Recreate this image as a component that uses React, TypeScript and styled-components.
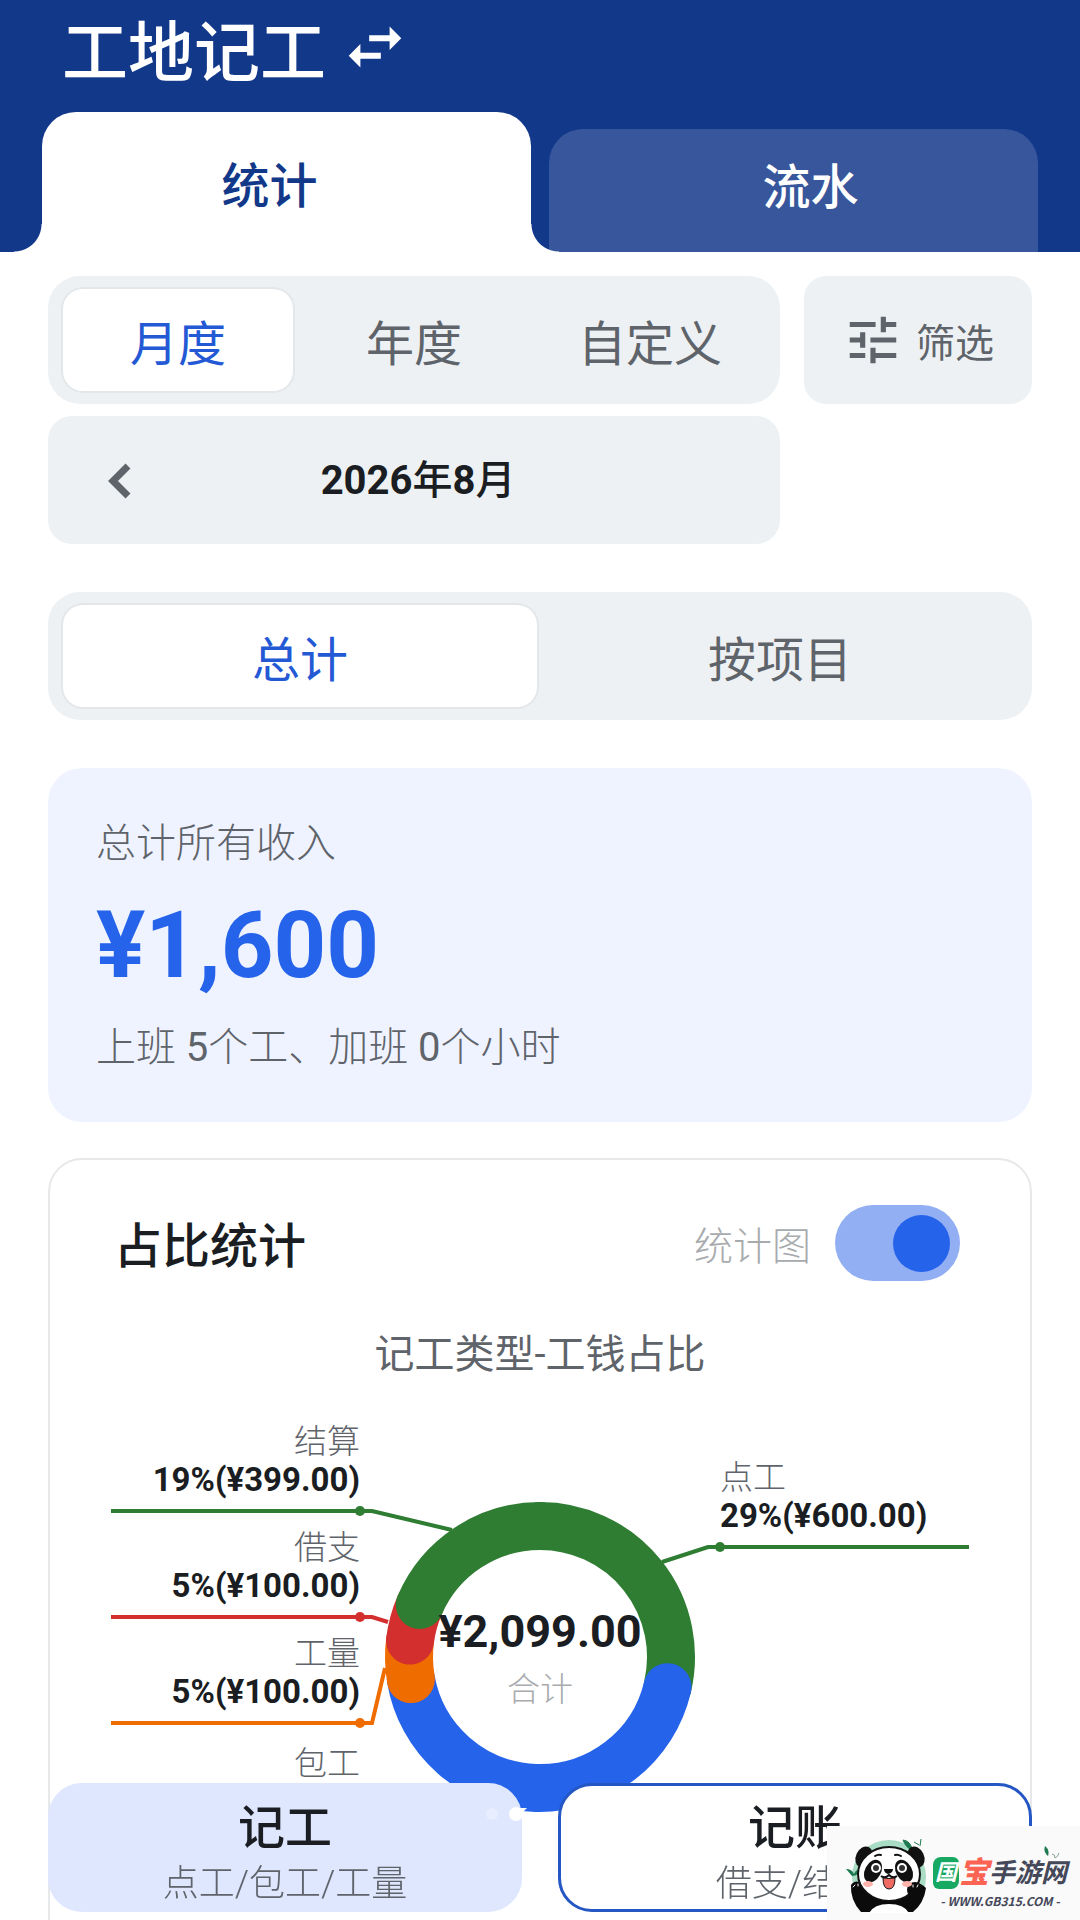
import React, { useId, useState } from "react";
import styled, { createGlobalStyle } from "styled-components";
import { MdSwapHoriz, MdTune } from "react-icons/md";

const color = {
  navy: "#12388a",
  navySoft: "#38569c",
  blue: "#2563eb",
  blueText: "#2459d6",
  blueBorder: "#2456c4",
  track: "#93aff4",
  fill: "#edf1f4",
  tint: "#eff3ff",
  action: "#dfe7ff",
  ink: "#1a1d21",
  gray: "#5f646b",
  mute: "#a8abae",
  line: "#e6e8ea",
  green: "#2e7d32",
  red: "#d32f2f",
  orange: "#ef6c00",
};

const GlobalStyle = createGlobalStyle`
  *, *::before, *::after { box-sizing: border-box; }
  body {
    margin: 0;
    background: #fff;
    color: ${color.ink};
    font-family: Roboto, "Noto Sans CJK SC", sans-serif;
  }
  button {
    border: 0;
    padding: 0;
    background: none;
    color: inherit;
    font: inherit;
    cursor: pointer;
  }
  h1, h2, h3, p { margin: 0; font-weight: inherit; }
`;

const Screen = styled.div`
  height: 100vh;
  overflow: hidden;
`;

/* ---------- header ---------- */

const Header = styled.header`
  background: ${color.navy};
`;

const TitleRow = styled.div`
  display: flex;
  align-items: center;
  gap: 14px;
  height: 112px;
  padding: 0 62px 18px;
  color: #fff;
`;

const AppTitle = styled.h1`
  padding-top: 14px;
  font-size: 66px;
  font-weight: 500;
  line-height: 80px;
`;

const IconButton = styled.button`
  display: flex;
`;

const Tabs = styled.nav`
  display: flex;
  align-items: flex-end;
  gap: 18px;
  padding: 0 42px;
`;

const Tab = styled.button<{ $active?: boolean }>`
  position: relative;
  flex: 1;
  height: ${(p) => (p.$active ? 140 : 123)}px;
  padding: ${(p) => (p.$active ? "0 34px 0 0" : "0 0 16px 34px")};
  border-radius: 34px 34px 0 0;
  background: ${(p) => (p.$active ? "#fff" : color.navySoft)};
  color: ${(p) => (p.$active ? color.navy : "#fff")};
  font-size: 48px;
  font-weight: 500;
  z-index: ${(p) => (p.$active ? 1 : 0)};

  &::before,
  &::after {
    content: "";
    display: ${(p) => (p.$active ? "block" : "none")};
    position: absolute;
    bottom: 0;
    width: 28px;
    height: 28px;
  }
  &::before {
    right: 100%;
    background: radial-gradient(circle at 0 0, transparent 27px, #fff 28px);
  }
  &::after {
    left: 100%;
    background: radial-gradient(circle at 100% 0, transparent 27px, #fff 28px);
  }
`;

/* ---------- controls ---------- */

const Main = styled.main`
  padding: 24px 48px 0;
`;

const Filters = styled.section`
  display: grid;
  grid-template-columns: 732fr 228fr;
  grid-auto-rows: 128px;
  gap: 12px 24px;
`;

const Segments = styled.div<{ $spaced?: boolean }>`
  display: flex;
  gap: 6px;
  height: 128px;
  margin: ${(p) => (p.$spaced ? "48px 0" : "0")};
  padding: 13px 15px;
  border-radius: 32px;
  background: ${color.fill};
`;

const Segment = styled.button<{ $active?: boolean }>`
  flex: 1;
  border-radius: 20px;
  background: ${(p) => (p.$active ? "#fff" : "transparent")};
  box-shadow: ${(p) => (p.$active ? "0 0 0 2px #e4e7ea" : "none")};
  color: ${(p) => (p.$active ? color.blueText : color.gray)};
  font-size: 48px;
`;

const FilterButton = styled.button`
  display: flex;
  align-items: center;
  justify-content: center;
  gap: 12px;
  border-radius: 22px;
  background: ${color.fill};
  color: ${color.gray};
  font-size: 39px;
`;

const MonthPicker = styled.div`
  display: grid;
  grid-template-columns: 68px 1fr 60px;
  align-items: center;
  padding: 2px 38px 0;
  border-radius: 24px;
  background: ${color.fill};
  color: ${color.gray};
`;

const Chevron = styled.svg`
  width: 68px;
  height: 68px;
  fill: none;
  stroke: currentColor;
  stroke-width: 7px;
`;

const Month = styled.span`
  color: ${color.ink};
  font-size: 40px;
  font-weight: 500;
  line-height: 56px;
  text-align: center;
`;

const Strong = styled.b`
  font-weight: 700;
`;

/* ---------- income card ---------- */

const IncomeCard = styled.section`
  display: flex;
  flex-direction: column;
  padding: 46px 48px 44px;
  border-radius: 34px;
  background: ${color.tint};
`;

const Note = styled.p`
  color: ${color.gray};
  font-size: 40px;
  font-weight: 300;
  line-height: 60px;
`;

const Digit = styled.span`
  font-weight: 400;
`;

const Amount = styled.strong`
  color: ${color.blue};
  font-size: 92px;
  line-height: 108px;
  margin: 18px 0;
`;

/* ---------- share card ---------- */

const ShareCard = styled.section`
  margin-top: 36px;
  border: 2px solid ${color.line};
  border-radius: 34px;
`;

const ShareHead = styled.div`
  display: flex;
  align-items: center;
  justify-content: space-between;
  padding: 45px 70px 0 64px;
`;

const ShareTitle = styled.h2`
  padding-top: 8px;
  font-size: 48px;
  font-weight: 500;
  line-height: 68px;
`;

const ToggleLabel = styled.label`
  display: flex;
  align-items: center;
  gap: 24px;
  color: ${color.mute};
  font-size: 39px;
  font-weight: 300;
`;

const Toggle = styled.input`
  display: flex;
  align-items: center;
  appearance: none;
  width: 125px;
  height: 76px;
  margin: 0;
  padding: 0 10px;
  border-radius: 38px;
  background: #cfd3d8;
  cursor: pointer;

  &::before {
    content: "";
    width: 57px;
    height: 57px;
    border-radius: 50%;
    background: #fff;
  }
  &:checked {
    justify-content: flex-end;
    background: ${color.track};
  }
  &:checked::before {
    background: ${color.blue};
  }
`;

const ChartTitle = styled.h3`
  margin: 44px 0 2px;
  color: ${color.gray};
  font-size: 40px;
  line-height: 60px;
  text-align: center;
`;

const Chart = styled.svg`
  display: block;
  width: 100%;
`;

const PartName = styled.text`
  fill: ${color.gray};
  font-size: 33px;
  font-weight: 300;
`;

const PartValue = styled.text`
  fill: ${color.ink};
  font-size: 33px;
  font-weight: 700;
`;

const Total = styled.text`
  fill: ${color.ink};
  font-size: 45px;
  font-weight: 700;
  text-anchor: middle;
`;

const TotalName = styled.text`
  fill: ${color.mute};
  font-size: 33px;
  font-weight: 300;
  text-anchor: middle;
`;

/* ---------- bottom actions ---------- */

const Actions = styled.footer`
  position: fixed;
  right: 48px;
  bottom: 8px;
  left: 48px;
  display: grid;
  grid-template-columns: 1fr 1fr;
  gap: 36px;
`;

const Action = styled.button<{ $outlined?: boolean }>`
  display: flex;
  flex-direction: column;
  align-items: center;
  justify-content: center;
  height: 129px;
  padding-top: 10px;
  border: 3px solid ${(p) => (p.$outlined ? color.blueBorder : color.action)};
  border-radius: 34px;
  background: ${(p) => (p.$outlined ? "#fff" : color.action)};
`;

const ActionName = styled.span`
  font-size: 47px;
  font-weight: 500;
  line-height: 62px;
`;

const ActionHint = styled.span`
  color: ${color.gray};
  font-size: 36px;
  font-weight: 300;
  line-height: 50px;
`;

const PageDots = styled.svg`
  position: fixed;
  bottom: 96px;
  left: 480px;
  width: 80px;
  height: 20px;
`;

/* ---------- site badge ---------- */

const Badge = styled.aside`
  position: fixed;
  right: 0;
  bottom: 0;
  display: flex;
  align-items: center;
  gap: 5px;
  width: 253px;
  height: 94px;
  padding-left: 19px;
  background: #fafafa;
`;

const Panda = styled.svg`
  flex: none;
  width: 82px;
  height: 80px;
`;

const BadgeText = styled.div`
  display: flex;
  flex-direction: column;
  align-items: center;
  padding-top: 20px;
`;

const BadgeName = styled.div`
  display: flex;
  align-items: center;
  color: #454859;
  font-size: 26px;
  font-style: italic;
  font-weight: 700;
  line-height: 36px;
`;

const Seal = styled.span`
  display: flex;
  align-items: center;
  justify-content: center;
  width: 26px;
  height: 32px;
  border-radius: 8px 6px 8px 6px;
  background: #17a862;
  color: #fff;
  font-size: 22px;
`;

const Treasure = styled.span`
  color: #fb6353;
  font-size: 30px;
  font-weight: 900;
`;

const BadgeUrl = styled.div`
  color: #454859;
  font-family: "Noto Sans CJK SC", sans-serif;
  font-size: 12px;
  font-style: italic;
  font-weight: 700;
  line-height: 20px;
`;

const Leaves = styled.svg`
  position: absolute;
  top: 20px;
  right: 20px;
  width: 16px;
  height: 14px;
`;

/* ---------- chart data ---------- */

const CX = 490;
const CY = 270;
const R = 131;

/* share of the ring, in percent */
const slices = [
  { name: "点工", share: 28.7, fill: color.green },
  { name: "包工", share: 43.6, fill: color.blue },
  { name: "工量", share: 4.7, fill: color.orange },
  { name: "借支", share: 4.5, fill: color.red },
  { name: "结算", share: 18.5, fill: color.green },
];

const leaders = [
  { name: "结算", text: "19%(¥399.00)", y: 124, fill: color.green, tip: "402,143" },
  { name: "借支", text: "5%(¥100.00)", y: 230, fill: color.red, tip: "338,235" },
  { name: "工量", text: "5%(¥100.00)", y: 336, fill: color.orange, tip: "335,281" },
];

function point(share: number) {
  const a = (share / 100) * 2 * Math.PI;
  return `${CX + R * Math.sin(a)} ${CY - R * Math.cos(a)}`;
}

function Donut() {
  let start = 0;
  return (
    <g fill="none" strokeWidth={48} strokeLinecap="round">
      {slices.map((s) => {
        const from = start;
        start += s.share;
        return (
          <path
            key={s.name}
            d={`M${point(from)}A${R} ${R} 0 ${s.share > 50 ? 1 : 0} 1 ${point(start)}`}
            stroke={s.fill}
          />
        );
      })}
    </g>
  );
}

function ShareChart() {
  return (
    <Chart viewBox="0 0 980 640" role="img" aria-label="记工类型-工钱占比">
      {leaders.map((l) => (
        <g key={l.name}>
          <polyline points={`61,${l.y} 322,${l.y} ${l.tip}`} fill="none" stroke={l.fill} strokeWidth={4} />
          <circle cx={310} cy={l.y} r={5} fill={l.fill} />
          <PartName x={310} y={l.y - 58} textAnchor="end">{l.name}</PartName>
          <PartValue x={310} y={l.y - 20} textAnchor="end">{l.text}</PartValue>
        </g>
      ))}
      <PartName x={310} y={388} textAnchor="end">包工</PartName>
      <polyline points="919,160 658,160 612,175" fill="none" stroke={color.green} strokeWidth={4} />
      <circle cx={670} cy={160} r={5} fill={color.green} />
      <PartName x={670} y={102}>点工</PartName>
      <PartValue x={670} y={140}>29%(¥600.00)</PartValue>
      <Donut />
      <Total x={CX} y={260}>¥2,099.00</Total>
      <TotalName x={CX} y={314}>合计</TotalName>
    </Chart>
  );
}

function PandaLogo() {
  return (
    <Panda viewBox="0 0 82 80" aria-hidden="true">
      <circle cx="43" cy="44" r="37" fill="#a9dcc4" />
      <path d="M0 36q6 0 8 5q2-5 7-5q-2 7-9 7z" fill="#1f7a50" />
      <path d="M57 7q8 1 9 10q-6-2-9-10zM68 9l5 3M75 6l-1 7" fill="#1f7a50" stroke="#1f7a50" />
      <ellipse cx="18" cy="24" rx="8" ry="11" fill="#111" transform="rotate(25 18 24)" />
      <ellipse cx="70" cy="24" rx="8" ry="11" fill="#111" transform="rotate(-25 70 24)" />
      <path d="M5 52q4-6 10-2l8 12h38q-1-12 8-12q6 0 11 5q-2 15-13 24h-52q-11-12-10-27z" fill="#0b0b0b" />
      <ellipse cx="43" cy="41" rx="31" ry="27" fill="#fff" stroke="#111" strokeWidth="2" />
      <circle cx="69" cy="57" r="8" fill="#0b0b0b" />
      <path d="M23 80q5-9 20-9t20 9z" fill="#fff" />
      <ellipse cx="27" cy="38" rx="8" ry="12" fill="#111" transform="rotate(28 27 38)" />
      <ellipse cx="58" cy="38" rx="8" ry="12" fill="#111" transform="rotate(-28 58 38)" />
      <circle cx="30" cy="35" r="5" fill="#fff" />
      <circle cx="56" cy="35" r="5" fill="#fff" />
      <circle cx="30" cy="35" r="3" fill="#333" />
      <circle cx="56" cy="35" r="3" fill="#333" />
      <path d="M29 23q3-2 6-1M49 22q3-1 6 1" fill="none" stroke="#111" strokeWidth="2" strokeLinecap="round" />
      <ellipse cx="22" cy="51" rx="5" ry="3" fill="#ffb3ab" />
      <ellipse cx="61" cy="51" rx="5" ry="3" fill="#ffb3ab" />
      <path d="M38 36h9q0 4-5 5q-4-1-4-5z" fill="#111" />
      <path d="M35 43q4 3 8-1q4 4 8 1" fill="none" stroke="#111" strokeWidth="2" />
      <path d="M37 45q6 1 12 0q0 11-6 11t-6-11z" fill="#ee6a62" stroke="#111" />
      <path d="M7 54l2-2M12 53v-2M67 54v-2M71 54l1-2" stroke="#fff" strokeLinecap="round" />
    </Panda>
  );
}

export default function App() {
  const [showChart, setShowChart] = useState(true);
  const toggleId = useId();

  return (
    <Screen>
      <GlobalStyle />
      <Header>
        <TitleRow>
          <AppTitle>工地记工</AppTitle>
          <IconButton aria-label="切换">
            <MdSwapHoriz size={70} />
          </IconButton>
        </TitleRow>
        <Tabs>
          <Tab $active>统计</Tab>
          <Tab>流水</Tab>
        </Tabs>
      </Header>

      <Main>
        <Filters>
          <Segments>
            <Segment $active>月度</Segment>
            <Segment>年度</Segment>
            <Segment>自定义</Segment>
          </Segments>
          <FilterButton>
            <MdTune size={62} />
            筛选
          </FilterButton>
          <MonthPicker>
            <IconButton aria-label="上个月">
              <Chevron viewBox="0 0 68 68" aria-hidden="true">
                <path d="M42 19L27 34l15 15" />
              </Chevron>
            </IconButton>
            <Month>
              <Strong>2026</Strong>年<Strong>8</Strong>月
            </Month>
          </MonthPicker>
        </Filters>

        <Segments $spaced>
          <Segment $active>总计</Segment>
          <Segment>按项目</Segment>
        </Segments>

        <IncomeCard>
          <Note>总计所有收入</Note>
          <Amount>¥1,600</Amount>
          <Note>
            上班 <Digit>5</Digit>个工、加班 <Digit>0</Digit>个小时
          </Note>
        </IncomeCard>

        <ShareCard>
          <ShareHead>
            <ShareTitle>占比统计</ShareTitle>
            <ToggleLabel htmlFor={toggleId}>
              统计图
              <Toggle
                id={toggleId}
                type="checkbox"
                checked={showChart}
                onChange={(e) => setShowChart(e.target.checked)}
              />
            </ToggleLabel>
          </ShareHead>
          <ChartTitle>记工类型-工钱占比</ChartTitle>
          {showChart && <ShareChart />}
        </ShareCard>
      </Main>

      <Actions>
        <Action>
          <ActionName>记工</ActionName>
          <ActionHint>点工/包工/工量</ActionHint>
        </Action>
        <Action $outlined>
          <ActionName>记账</ActionName>
          <ActionHint>借支/结算</ActionHint>
        </Action>
      </Actions>

      <PageDots viewBox="0 0 80 20" aria-hidden="true">
        <circle cx="12" cy="10" r="6" fill="#e8eeff" />
        <circle cx="36" cy="10" r="7" fill="#fff" />
        <path d="M36 4h11l-5 5z" fill="#fff" />
      </PageDots>

      <Badge>
        <PandaLogo />
        <BadgeText>
          <BadgeName>
            <Seal>国</Seal>
            <Treasure>宝</Treasure>手游网
          </BadgeName>
          <BadgeUrl>- WWW.GB315.COM -</BadgeUrl>
        </BadgeText>
        <Leaves viewBox="0 0 16 14" aria-hidden="true">
          <path d="M1 0q5 4 3 10q-5-4-3-10z" fill="#1f7a50" />
          <path d="M8 8q3 0 3 4q3-1 4-5" fill="none" stroke="#8aa398" />
        </Leaves>
      </Badge>
    </Screen>
  );
}
